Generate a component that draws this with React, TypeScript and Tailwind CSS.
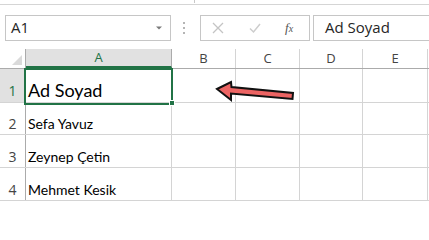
import { ChevronDown } from "lucide-react";

const cols = [
  { name: "A", w: "w-[146px]" },
  { name: "B", w: "w-[64px]" },
  { name: "C", w: "w-[64px]" },
  { name: "D", w: "w-[63px]" },
  { name: "E", w: "w-[65px]" },
];

const rows = [
  { n: 1, h: "h-[34px]", text: "Ad Soyad", big: true },
  { n: 2, h: "h-[32px]", text: "Sefa Yavuz" },
  { n: 3, h: "h-[33px]", text: "Zeynep Çetin" },
  { n: 4, h: "h-[33px]", text: "Mehmet Kesik" },
];

const cellFont = { fontFamily: "Lato, 'Open Sans', sans-serif" };
const uiFont = { fontFamily: "'Open Sans', 'Noto Sans', sans-serif" };

export default function App() {
  return (
    <div className="relative w-[429px] h-[206px] bg-white overflow-hidden text-black" style={uiFont}>
      {/* ribbon edge */}
      <div className="relative h-[5px] border-b border-[#d5d5d5]">
        <div className="absolute left-[194px] top-0 w-px h-[3px] bg-[#c8c8c8]" />
      </div>

      {/* formula bar */}
      <div className="flex items-center h-[44px] pt-[1px]">
        <div className="ml-[5px] w-[166px] h-[26px] border border-[#c6c6c6] flex items-center justify-between pl-[5px] pr-[5px]">
          <span className="text-[15px] text-[#262626]">A1</span>
          <ChevronDown className="w-3 h-3 text-[#7a7a7a]" fill="#7a7a7a" strokeWidth={0} />
        </div>
        <div className="ml-[12px] flex flex-col gap-[3px] w-[2px]">
          <span className="w-[2px] h-[2px] bg-[#b5b5b5]" />
          <span className="w-[2px] h-[2px] bg-[#b5b5b5]" />
          <span className="w-[2px] h-[2px] bg-[#b5b5b5]" />
        </div>
        <div className="ml-[15px] w-[110px] h-[26px] border border-[#c6c6c6] flex items-center pl-[10px]">
          <svg width="12" height="12" viewBox="0 0 12 12" className="ml-[1px]">
            <path d="M1 1 L11 11 M11 1 L1 11" stroke="#c4c4c4" strokeWidth="1.3" />
          </svg>
          <svg width="12" height="12" viewBox="0 0 12 12" className="ml-[25px]">
            <path d="M1 6.5 L4.5 10 L11 2" stroke="#cdcdcd" strokeWidth="1.5" fill="none" />
          </svg>
          <span
            className="ml-[24px] text-[13px] italic text-[#555]"
            style={{ fontFamily: "'Liberation Serif', serif" }}
          >
            f<span className="text-[10px]">x</span>
          </span>
        </div>
        <div className="ml-[3px] flex-1 h-[26px] border border-r-0 border-[#c6c6c6] flex items-center pl-[11px]">
          <span className="text-[15px] text-[#262626]">Ad Soyad</span>
        </div>
      </div>

      {/* column headers */}
      <div className="flex h-[20px] border-b border-[#ababab]">
        <div className="relative w-[26px] border-r border-[#ababab]">
          <div className="absolute right-[3px] bottom-[3px] w-0 h-0 border-l-[10px] border-l-transparent border-b-[10px] border-b-[#dadada]" />
        </div>
        {cols.map((c) => (
          <div
            key={c.name}
            className={`${c.w} shrink-0 flex items-center justify-center text-[13px] border-r ${
              c.name === "A"
                ? "bg-[#e1e1e1] text-[#217346] border-[#ababab] border-b-2 border-b-[#217346]"
                : "text-[#444] border-[#d4d4d4]"
            }`}
          >
            {c.name}
          </div>
        ))}
        <div className="flex-1" />
      </div>

      {/* rows */}
      {rows.map((r) => (
        <div key={r.n} className={`flex ${r.h} border-b border-[#d4d4d4]`}>
          <div
            className={`w-[26px] shrink-0 border-r border-[#ababab] flex items-end justify-center text-[14px] leading-[20px] ${
              r.n === 1 ? "bg-[#e1e1e1] text-[#217346] pb-[1px]" : "text-[#444]"
            }`}
          >
            {r.n}
          </div>
          {cols.map((c, i) => (
            <div
              key={c.name}
              className={`${c.w} shrink-0 border-r border-[#d4d4d4] flex items-end pl-[2px]`}
              style={cellFont}
            >
              {i === 0 && (
                <span className={r.big ? "text-[18px] leading-[24px]" : "text-[14px] leading-[18px] pb-[1px]"}>
                  {r.text}
                </span>
              )}
            </div>
          ))}
          <div className="flex-1" />
        </div>
      ))}

      {/* selection around A1 */}
      <div className="absolute left-[24px] top-[68px] w-[149px] h-[37px] border-2 border-[#217346]" />
      <div className="absolute left-[169px] top-[100px] w-[6px] h-[6px] bg-[#217346] border border-white" />

      {/* red arrow */}
      <svg className="absolute left-[214px] top-[79px]" width="84" height="24" viewBox="0 0 84 24">
        <path
          d="M3 10 L17 3 L17.5 8 L79 14 L78.5 20 L17 14.5 L17 21 Z"
          fill="#ec6463"
          stroke="#111"
          strokeWidth="2"
          strokeLinejoin="miter"
        />
      </svg>
    </div>
  );
}
